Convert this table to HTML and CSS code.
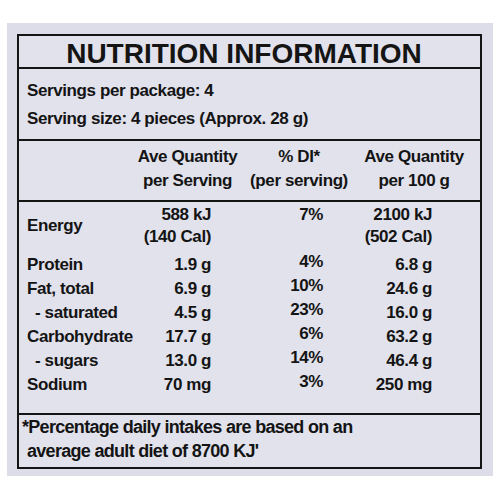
FILE: index.html
```html
<!DOCTYPE html>
<html lang="en">
<head>
    <meta charset="UTF-8">
    <meta name="viewport" content="width=device-width, initial-scale=1.0">
    <title>Nutrition Information</title>
    <link rel="stylesheet" href="styles.css">
</head>
<body>
    <div class="panel">
        <div class="label-box">
            <h1 class="title">NUTRITION INFORMATION</h1>
            <div class="servings">
                <div>Servings per package: 4</div>
                <div>Serving size: 4 pieces (Approx. 28 g)</div>
            </div>
            <div class="head cols">
                <div></div>
                <div>Ave Quantity<br>per Serving</div>
                <div>% DI*<br>(per serving)</div>
                <div>Ave Quantity<br>per 100 g</div>
            </div>
            <div class="body">
                <div class="energy cols">
                    <div class="name">Energy</div>
                    <div class="val">588 kJ<br>(140 Cal)</div>
                    <div class="pct">7%</div>
                    <div class="val100">2100 kJ<br>(502 Cal)</div>
                </div>
                <div class="row cols">
                    <div class="name">Protein</div>
                    <div class="val">1.9 g</div>
                    <div class="pct">4%</div>
                    <div class="val100">6.8 g</div>
                </div>
                <div class="row cols">
                    <div class="name">Fat, total</div>
                    <div class="val">6.9 g</div>
                    <div class="pct">10%</div>
                    <div class="val100">24.6 g</div>
                </div>
                <div class="row cols">
                    <div class="name sub">- saturated</div>
                    <div class="val">4.5 g</div>
                    <div class="pct">23%</div>
                    <div class="val100">16.0 g</div>
                </div>
                <div class="row cols">
                    <div class="name">Carbohydrate</div>
                    <div class="val">17.7 g</div>
                    <div class="pct">6%</div>
                    <div class="val100">63.2 g</div>
                </div>
                <div class="row cols">
                    <div class="name sub">- sugars</div>
                    <div class="val">13.0 g</div>
                    <div class="pct">14%</div>
                    <div class="val100">46.4 g</div>
                </div>
                <div class="row cols">
                    <div class="name">Sodium</div>
                    <div class="val">70 mg</div>
                    <div class="pct">3%</div>
                    <div class="val100">250 mg</div>
                </div>
            </div>
            <div class="footnote">*Percentage daily intakes are based on an<br>average adult diet of 8700 KJ'</div>
        </div>
    </div>
</body>
</html>
```

FILE: styles.css
```css
body {
    margin: 0;
    background-color: #fff;
    font-family: "Liberation Sans", Arial, sans-serif;
    font-weight: bold;
    color: #141414;
}
.panel {
    margin: 23px 7px 0 7px;
    padding: 11px 11px 7px 10px;
    background-color: #dcdde8;
}
.label-box {
    border: 2px solid #141414;
    background-color: #e1e2ec;
}
.title {
    margin: 0;
    padding: 5px 11px 0 0;
    line-height: 26px;
    font-size: 28px;
    text-align: center;
    border-bottom: 2px solid #141414;
}
.servings {
    padding: 8px 0 6px 8px;
    font-size: 17px;
    line-height: 28px;
    letter-spacing: -0.4px;
    border-bottom: 2px solid #141414;
}
.cols {
    display: grid;
    grid-template-columns: 108px 105px 118px 112px;
    padding-left: 8px;
    font-size: 17px;
    letter-spacing: -0.4px;
}
.head {
    padding-top: 4px;
    padding-bottom: 7px;
    line-height: 24px;
    text-align: center;
    border-bottom: 2px solid #141414;
}
.body {
    padding: 2px 0 16px 0;
    border-bottom: 2px solid #141414;
}
.energy {
    line-height: 22px;
    margin-bottom: 5px;
}
.energy .name {
    align-self: center;
}
.row {
    line-height: 24px;
}
.val {
    text-align: right;
    padding-right: 29px;
}
.pct {
    text-align: right;
    padding-right: 35px;
}
.val100 {
    text-align: right;
    padding-right: 38px;
}
.row .pct {
    margin-top: -3px;
    margin-bottom: 3px;
}
.sub {
    padding-left: 8px;
}
.footnote {
    padding: 0 0 4px 8px;
    text-indent: -5px;
    font-size: 18px;
    line-height: 24px;
    letter-spacing: -0.7px;
}
```
